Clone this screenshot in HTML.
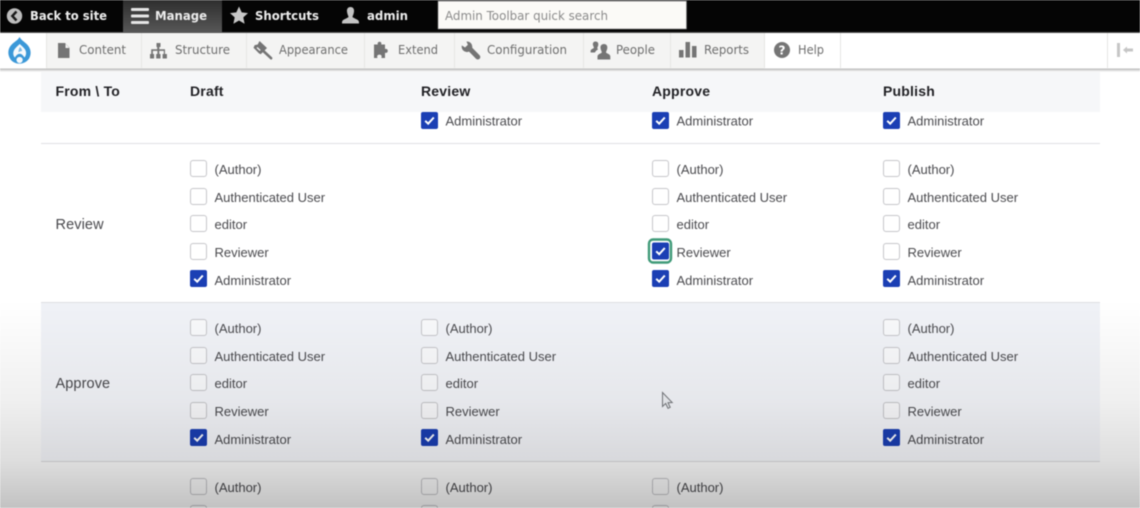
<!DOCTYPE html>
<html lang="en"><head><meta charset="utf-8"><title>Workflow permissions</title>
<style>
html,body{margin:0;padding:0;width:1140px;height:508px;overflow:hidden;background:#fff}
svg{display:block;filter:blur(.45px)}
.t{font:13px "Liberation Sans",sans-serif;fill:#4b4b4f;letter-spacing:0}
.h{font:bold 14px "Liberation Sans",sans-serif;fill:#222226;letter-spacing:.2px}
.r{font:14.5px "Liberation Sans",sans-serif;fill:#48484c;letter-spacing:.1px}
.b{font:bold 12px "DejaVu Sans",sans-serif;fill:#ececec}
.n{font:12px "DejaVu Sans",sans-serif;fill:#6e6e6e}
</style></head><body>
<svg width="1140" height="508" viewBox="0 0 1140 508" xmlns="http://www.w3.org/2000/svg">
<defs>
<linearGradient id="fade" gradientUnits="userSpaceOnUse" x1="0" y1="300" x2="0" y2="508"><stop offset="0" stop-color="#000" stop-opacity="0"/><stop offset=".48" stop-color="#000" stop-opacity=".06"/><stop offset=".77" stop-color="#000" stop-opacity=".13"/><stop offset="1" stop-color="#000" stop-opacity=".24"/></linearGradient>
<linearGradient id="row" x1="0" y1="0" x2="0" y2="1"><stop offset="0" stop-color="#f0f2f7"/><stop offset="1" stop-color="#f8f9fd"/></linearGradient>
<linearGradient id="mg" x1="0" y1="0" x2="0" y2="1"><stop offset="0" stop-color="#2e2e2e"/><stop offset="1" stop-color="#585858"/></linearGradient>
<linearGradient id="sh" x1="0" y1="0" x2="0" y2="1"><stop offset="0" stop-color="#aaa"/><stop offset="1" stop-color="#fff"/></linearGradient>
<g id="u"><rect x=".5" y=".5" width="16" height="16" rx="2.5" fill="#fff" fill-opacity=".55" stroke="#c6c6ca"/></g>
<g id="c"><rect width="17" height="17" rx="2" fill="#1b3fb4"/><path d="M4.2 8.8l3 2.9 5.6-6.2" fill="none" stroke="#fff" stroke-width="2"/></g>
</defs>
<rect width="1140" height="508" fill="#fff"/>

<!-- table -->
<rect x="41" y="70" width="1059" height="42" fill="#f6f7f9"/>
<rect x="41" y="303" width="1059" height="158" fill="url(#row)"/>
<rect x="41" y="143" width="1059" height="1" fill="#e0e0e3"/>
<rect x="41" y="302" width="1059" height="1" fill="#dedee2"/>
<rect x="41" y="461" width="1059" height="1" fill="#dcdcdf"/>

<text class="h" x="55.500" y="96">From \ To</text>
<text class="h" x="190" y="96">Draft</text>
<text class="h" x="421" y="96">Review</text>
<text class="h" x="652" y="96">Approve</text>
<text class="h" x="883" y="96">Publish</text>
<text class="r" x="55.500" y="229">Review</text>
<text class="r" x="55.500" y="388">Approve</text>

<!-- first row tail -->
<use href="#c" x="421" y="112"/><text class="t" x="445.500" y="125.500">Administrator</text>
<use href="#c" x="652" y="112"/><text class="t" x="676.500" y="125.500">Administrator</text>
<use href="#c" x="883" y="112"/><text class="t" x="907.500" y="125.500">Administrator</text>

<!-- Review row, Draft -->
<use href="#u" x="190" y="160"/><text class="t" x="214.500" y="174">(Author)</text>
<use href="#u" x="190" y="188"/><text class="t" x="214.500" y="202">Authenticated User</text>
<use href="#u" x="190" y="215"/><text class="t" x="214.500" y="229">editor</text>
<use href="#u" x="190" y="243"/><text class="t" x="214.500" y="257">Reviewer</text>
<use href="#c" x="190" y="270"/><text class="t" x="214.500" y="285">Administrator</text>
<!-- Review row, Approve -->
<use href="#u" x="652" y="160"/><text class="t" x="676.500" y="174">(Author)</text>
<use href="#u" x="652" y="188"/><text class="t" x="676.500" y="202">Authenticated User</text>
<use href="#u" x="652" y="215"/><text class="t" x="676.500" y="229">editor</text>
<rect x="649" y="239.500" width="22" height="23" rx="4" fill="none" stroke="#3f9a78" stroke-width="2.400"/>
<use href="#c" x="652" y="242.500"/><text class="t" x="676.500" y="257">Reviewer</text>
<use href="#c" x="652" y="270"/><text class="t" x="676.500" y="285">Administrator</text>
<!-- Review row, Publish -->
<use href="#u" x="883" y="160"/><text class="t" x="907.500" y="174">(Author)</text>
<use href="#u" x="883" y="188"/><text class="t" x="907.500" y="202">Authenticated User</text>
<use href="#u" x="883" y="215"/><text class="t" x="907.500" y="229">editor</text>
<use href="#u" x="883" y="243"/><text class="t" x="907.500" y="257">Reviewer</text>
<use href="#c" x="883" y="270"/><text class="t" x="907.500" y="285">Administrator</text>

<!-- Approve row, Draft -->
<use href="#u" x="190" y="319"/><text class="t" x="214.500" y="333">(Author)</text>
<use href="#u" x="190" y="347"/><text class="t" x="214.500" y="361">Authenticated User</text>
<use href="#u" x="190" y="374"/><text class="t" x="214.500" y="388">editor</text>
<use href="#u" x="190" y="402"/><text class="t" x="214.500" y="416">Reviewer</text>
<use href="#c" x="190" y="429"/><text class="t" x="214.500" y="444">Administrator</text>
<!-- Approve row, Review -->
<use href="#u" x="421" y="319"/><text class="t" x="445.500" y="333">(Author)</text>
<use href="#u" x="421" y="347"/><text class="t" x="445.500" y="361">Authenticated User</text>
<use href="#u" x="421" y="374"/><text class="t" x="445.500" y="388">editor</text>
<use href="#u" x="421" y="402"/><text class="t" x="445.500" y="416">Reviewer</text>
<use href="#c" x="421" y="429"/><text class="t" x="445.500" y="444">Administrator</text>
<!-- Approve row, Publish -->
<use href="#u" x="883" y="319"/><text class="t" x="907.500" y="333">(Author)</text>
<use href="#u" x="883" y="347"/><text class="t" x="907.500" y="361">Authenticated User</text>
<use href="#u" x="883" y="374"/><text class="t" x="907.500" y="388">editor</text>
<use href="#u" x="883" y="402"/><text class="t" x="907.500" y="416">Reviewer</text>
<use href="#c" x="883" y="429"/><text class="t" x="907.500" y="444">Administrator</text>

<!-- Last row -->
<use href="#u" x="190" y="478"/><text class="t" x="214.500" y="492">(Author)</text>
<use href="#u" x="421" y="478"/><text class="t" x="445.500" y="492">(Author)</text>
<use href="#u" x="652" y="478"/><text class="t" x="676.500" y="492">(Author)</text>
<use href="#u" x="190" y="505"/><use href="#u" x="421" y="505"/><use href="#u" x="652" y="505"/>

<!-- cursor -->
<path d="M662.500 392.500v14l3.200-3 2.300 4.800 2.200-1-2.200-4.600 4.200-.2z" fill="#eef0f4" stroke="#77797d" stroke-width="1"/>

<!-- video fade -->
<rect y="300" width="1140" height="208" fill="url(#fade)"/>

<!-- toolbars -->
<rect y="68" width="1140" height="4" fill="url(#sh)"/>
<rect y="33" width="1140" height="35.500" fill="#fff"/>
<rect x="46" y="33" width="718" height="35.500" fill="#f4f4f3"/>
<g fill="#e6e6e4">
<rect x="46" y="33" width="1" height="35"/><rect x="141" y="33" width="1" height="35"/><rect x="246" y="33" width="1" height="35"/><rect x="364" y="33" width="1" height="35"/><rect x="454" y="33" width="1" height="35"/><rect x="583" y="33" width="1" height="35"/><rect x="670" y="33" width="1" height="35"/><rect x="764" y="33" width="1" height="35"/><rect x="840" y="33" width="1" height="35"/><rect x="1107" y="33" width="1" height="35"/>
</g>
<rect width="1140" height="33" fill="#050505"/>
<rect x="123" width="99" height="33" fill="url(#mg)"/>
<rect y="32" width="1140" height="1" fill="#555"/>

<!-- top bar icons -->
<circle cx="14.500" cy="16" r="7.700" fill="#bdbdbd"/>
<path d="M16.500 11.500l-4.200 4.500 4.200 4.500" fill="none" stroke="#1a1a1a" stroke-width="2.400"/>
<g fill="#e6e6e6"><rect x="131" y="8" width="18" height="3" rx="1"/><rect x="131" y="14.500" width="18" height="3" rx="1"/><rect x="131" y="21" width="18" height="3" rx="1"/></g>
<path d="M239 6.500l2.700 5.900 6.300.7-4.700 4.300 1.300 6.300-5.600-3.200-5.600 3.200 1.300-6.300-4.700-4.300 6.300-.7z" fill="#c8c8c8"/>
<path d="M350.500 7c2.600 0 3.800 2 3.500 4.600-.2 2.300-1.200 3.900-1.500 5.200-.2 1.200 5.800 2.500 6.300 4.500.2.800.2 2.200.2 2.200h-17s0-1.400.2-2.200c.5-2 6.500-3.300 6.300-4.500-.3-1.300-1.300-2.900-1.500-5.200C346.700 9 347.900 7 350.500 7z" fill="#c4c4c4"/>

<text class="b" x="30" y="20" textLength="77" lengthAdjust="spacingAndGlyphs">Back to site</text>
<text class="b" x="155" y="20" textLength="52" lengthAdjust="spacingAndGlyphs">Manage</text>
<text class="b" x="255" y="20" textLength="64" lengthAdjust="spacingAndGlyphs">Shortcuts</text>
<text class="b" x="367" y="20" textLength="41" lengthAdjust="spacingAndGlyphs">admin</text>

<rect x="438" y="1" width="248.500" height="28" fill="#fbfaf7" stroke="#777" stroke-width=".6"/>
<text x="445" y="20" textLength="163" lengthAdjust="spacingAndGlyphs" style="font:12px 'DejaVu Sans',sans-serif;fill:#8b8b8b">Admin Toolbar quick search</text>

<!-- drupal -->
<path d="M19.500 37c1.700 3 4.500 4.500 7.400 7.300 3.800 3.700 5 9.400 2.200 14.200-4 6.400-14.400 7.100-18.700.6-3.200-4.900-2.700-10.800 1.700-15 3-2.800 6-4.100 7.400-7.100z" fill="#3b98d8"/>
<path d="M19.700 44c1.700 1.800 3.900 3.300 5.200 5.200 1.900 2.900 1.400 6.300-.5 8.300-1-1.900-3-3.700-4.700-3.700-1.800 0-3.800 1.800-4.800 3.700-1.900-2-2.300-5.400-.3-8.300 1.300-1.900 3.500-3.400 5.100-5.200z" fill="#f6fafd"/>
<path d="M20 47c1.200 1.200 2 2.400 2.100 4-1.100 0-2.700.5-3.700 1.400.2-2.100.6-4.100 1.600-5.400z" fill="#7dbbe6"/>
<circle cx="19.600" cy="60" r="3.100" fill="#f6fafd"/>

<!-- nav icons -->
<g fill="#757575">
<path d="M58 43h7l4.500 4.800V58H58zM65.500 43.800v4.200h3.900z" fill-rule="evenodd"/>
<path d="M156.500 43h4v4h-1.200v2.300h5.700V54h1.900v4.500h-4.300V54h1.200v-3.100h-4.500V54h1.200v4.500h-4.300V54h1.200v-3.100h-4.500V54h1.200v4.500H150V54h1.200v-4.700h6V47h-.7z"/>
<!-- brush/hammer -->
<path d="M259.500 41l7.500 7-6.300 6.300-1.700-.9-5.500-5.600 1.200-2.700 3-.6z"/>
<path d="M262.800 50.500l8.300 7.700" stroke="#757575" stroke-width="2.600" stroke-linecap="round"/>
<path d="M257 47.500l3.200 3" stroke="#f4f4f3" stroke-width="1.400"/>
<!-- puzzle -->
<path d="M374 44.500h3.800c-1.200-3.600 4.700-3.600 3.400 0h3.800v4.500c3.700-1.200 3.700 5 0 3.700V58h-3.700c1-2.500-.3-3.400-1.900-3.400s-2.900 1-1.900 3.400H374z"/>
<!-- wrench -->
<path d="M469.500 48.500l8.300 8.500" stroke="#757575" stroke-width="5" stroke-linecap="round"/>
<circle cx="467" cy="46.800" r="5.300"/>
<path d="M460.500 44.500l4.500 3 2.900-2.700-2.300-5.300h-5z" fill="#f4f4f3"/>
<!-- people -->
<path d="M595.500 41.500c2 0 3 1.400 2.800 3.200-.1 1.400-.9 2.400-1 3.400-.1.500.3.800 1 1.100-1.400.8-2.900 1.700-3.300 3.300h-4.400v-1.800c.3-1.900 3.400-2.100 3.300-3.100-.2-1-.9-1.900-1-3-.2-1.800.8-3.100 2.600-3.100z"/>
<path d="M604 44c2.500 0 3.600 1.900 3.300 4.100-.2 1.800-1.100 3-1.300 4.200-.1 1.100 4 1.500 4.300 4V59.500h-12.800V56.300c.3-2.500 4.400-2.900 4.300-4-.2-1.200-1.100-2.400-1.300-4.200-.3-2.200.9-4.100 3.500-4.100z"/>
<rect x="679" y="50" width="4.500" height="7.500"/><rect x="685.500" y="42" width="4.500" height="15.500"/><rect x="692" y="46" width="4.500" height="11.500"/>
</g>
<circle cx="782" cy="50" r="8" fill="#757575"/>
<text x="782" y="54.500" text-anchor="middle" style="font:bold 12px 'DejaVu Sans',sans-serif;fill:#fff">?</text>

<text class="n" x="79" y="54" textLength="47" lengthAdjust="spacingAndGlyphs">Content</text>
<text class="n" x="175" y="54" textLength="55" lengthAdjust="spacingAndGlyphs">Structure</text>
<text class="n" x="279" y="54" textLength="69" lengthAdjust="spacingAndGlyphs">Appearance</text>
<text class="n" x="398" y="54" textLength="40" lengthAdjust="spacingAndGlyphs">Extend</text>
<text class="n" x="487" y="54" textLength="80" lengthAdjust="spacingAndGlyphs">Configuration</text>
<text class="n" x="616" y="54" textLength="39" lengthAdjust="spacingAndGlyphs">People</text>
<text class="n" x="704" y="54" textLength="45" lengthAdjust="spacingAndGlyphs">Reports</text>
<text class="n" x="798" y="54" textLength="26" lengthAdjust="spacingAndGlyphs">Help</text>

<!-- collapse toggle -->
<rect x="1117" y="43" width="3" height="14" fill="#c6c6c6"/>
<path d="M1123 50l4-3.500v2h6v3h-6v2z" fill="#c6c6c6"/>
</svg>
</body></html>
